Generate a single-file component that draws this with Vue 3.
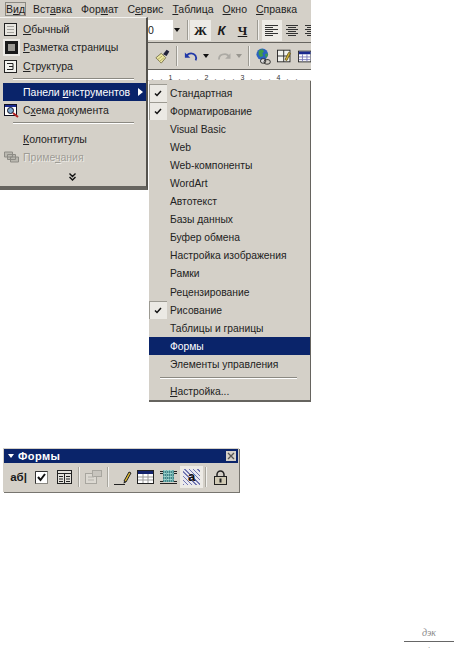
<script setup>
const menuBar = [
  { label: "Вид", u: 1, active: true },
  { label: "Вставка", u: 3 },
  { label: "Формат", u: 3 },
  { label: "Сервис", u: 1 },
  { label: "Таблица", u: 0 },
  { label: "Окно", u: 0 },
  { label: "Справка", u: 0 },
];

const toolbarItems = [
  "Стандартная",
  "Форматирование",
  "Visual Basic",
  "Web",
  "Web-компоненты",
  "WordArt",
  "Автотекст",
  "Базы данных",
  "Буфер обмена",
  "Настройка изображения",
  "Рамки",
  "Рецензирование",
  "Рисование",
  "Таблицы и границы",
  "Формы",
  "Элементы управления",
];
const checked = ["Стандартная", "Форматирование", "Рисование"];

const rulerTicks = [".", ".", ".", "1", ".", ".", ".", "2", ".", ".", ".", "3", ".", ".", ".", "4", ".", "."];
</script>

<template>
  <div class="page">
    <div class="word">
      <div class="menubar">
        <span v-for="m in menuBar" :key="m.label" class="top" :class="{ active: m.active }">{{ m.label.slice(0, m.u) }}<u>{{ m.label[m.u] }}</u>{{ m.label.slice(m.u + 1) }}</span>
      </div>
      <div class="bar bar1">
        <div class="combo">0</div>
        <div class="drop"><i class="arrow"></i></div>
        <div class="sep"></div>
        <span class="fmt on">Ж</span>
        <span class="fmt it">К</span>
        <span class="fmt un">Ч</span>
        <div class="sep gap"></div>
        <span class="align on"><svg width="14" height="12" viewBox="0 0 14 12"><path d="M0 1.500h13M0 3.500h8M0 5.500h13M0 7.500h8M0 9.500h13M0 11.500h8" stroke="#333" /></svg></span>
        <span class="align"><svg width="14" height="12" viewBox="0 0 14 12"><path d="M1 1.500h12M3 3.500h8M1 5.500h12M3 7.500h8M1 9.500h12M3 11.500h8" stroke="#333" /></svg></span>
        <span class="align end"><svg width="8" height="12" viewBox="0 0 8 12"><path d="M2 1.500h6M4 3.500h4M2 5.500h6M4 7.500h4M2 9.500h6M4 11.500h4" stroke="#333" /></svg></span>
      </div>
      <div class="bar bar2">
        <svg class="brush" width="17" height="18" viewBox="0 0 17 18"><path d="M1 11l6-5 5 5-5 6z" fill="#ece6a0" stroke="#77724a" /><path d="M3 13l5-4M5 15l5-4" stroke="#b0a860" /><path d="M9 7l4-5 3 2-3 5z" fill="#22243a" /></svg>
        <div class="sep s2"></div>
        <svg class="undo" width="15" height="14" viewBox="0 0 15 14"><path d="M13 12c2-4-1-8-5-8-2 0-4 1-5 3" fill="none" stroke="#2038a8" stroke-width="2" /><path d="M1 3v6h6z" fill="#2038a8" /></svg>
        <i class="arrow a1"></i>
        <svg class="redo" width="15" height="14" viewBox="0 0 15 14"><path d="M1 11c0-4 3-6 7-6 2 0 3 1 4 2" fill="none" stroke="#acaaa4" stroke-width="2" /><path d="M14 4v6H8z" fill="#acaaa4" /></svg>
        <i class="arrow a2 dim"></i>
        <div class="sep s3"></div>
        <svg class="globe" width="17" height="19" viewBox="0 0 17 19"><circle cx="7" cy="7" r="6.500" fill="#2a62c0" /><path d="M3 3l4-2 2 3-2 2 1 3-3 1-2-3zM10 7l3-1 0 3-2 2z" fill="#3f9c48" /><rect x="5" y="12" width="6" height="5" rx="2.500" fill="#ddd" stroke="#222" /><rect x="9" y="13" width="7" height="5" rx="2.500" fill="none" stroke="#222" /></svg>
        <svg class="gridp" width="16" height="16" viewBox="0 0 16 16"><rect x="0.500" y="1.500" width="14" height="13" fill="#f2f2ee" stroke="#222" /><path d="M7.500 1.500v13M0.500 8h14" stroke="#222" /><path d="M9 12l4-8 2 1-4 8z" fill="#d8b838" stroke="#6a5a18" /></svg>
        <svg class="tbl" width="15" height="15" viewBox="0 0 15 15"><rect x="0.500" y="1.500" width="14" height="12" fill="#fff" stroke="#222" /><rect x="1" y="2" width="13" height="3" fill="#1a2a90" /><path d="M1 8h13M1 11h13M5 5v8M10 5v8" stroke="#7878b8" /></svg>
      </div>
      <div class="ruler">
        <span v-for="(t, i) in rulerTicks" :key="i" class="tick">{{ t }}</span>
      </div>

      <div class="menu">
        <div class="mi"><svg class="mic" width="13" height="13" viewBox="0 0 13 13"><rect x="0.500" y="0.500" width="12" height="12" fill="#e8e6e0" stroke="#222" /><path d="M3 3.500h7M3 6.500h7M3 9.500h7" stroke="#a4a29c" /></svg><span><u>О</u>бычный</span></div>
        <div class="mi"><span class="pressed"><svg width="13" height="13" viewBox="0 0 13 13"><rect width="13" height="13" fill="#1a1a1a" /><rect x="3" y="3" width="7" height="7" fill="#9c9a94" /></svg></span><span><u>Р</u>азметка страницы</span></div>
        <div class="mi"><svg class="mic" width="13" height="13" viewBox="0 0 13 13"><rect x="0.500" y="0.500" width="12" height="12" fill="#f2f2ee" stroke="#222" /><path d="M3 3.500h6v6H3M5 6.500h4" fill="none" stroke="#222" /></svg><span><u>С</u>труктура</span></div>
        <hr class="rule" />
        <div class="mi sel"><span>Панели <u>и</u>нструментов</span><i class="sub"></i></div>
        <div class="mi"><svg class="mic" width="15" height="14" viewBox="0 0 15 14"><rect x="0.500" y="0.500" width="12" height="11" fill="#fff" stroke="#112" /><rect x="1" y="1" width="11" height="2" fill="#1a2a90" /><circle cx="6.500" cy="6.500" r="3" fill="#7fa8d0" stroke="#112" /><path d="M9 9l5 4" stroke="#b02020" stroke-width="2" /></svg><span>С<u>х</u>ема документа</span></div>
        <hr class="rule last" />
        <div class="mi"><span><u>К</u>олонтитулы</span></div>
        <div class="mi off"><svg class="mic" width="15" height="12" viewBox="0 0 15 12"><path d="M0.500 1h8v5h-8zM3.500 3.500h8v5h-8zM6.500 6h8v5h-8z" fill="#bab8b0" stroke="#8e8c86" /></svg><span>Приме<u>ч</u>ания</span></div>
        <div class="more"><svg width="7" height="8" viewBox="0 0 7 8"><path d="M0.500 0.500l3 3 3-3M0.500 4l3 3 3-3" fill="none" stroke="#111" stroke-width="1.400" /></svg></div>
      </div>

      <div class="submenu">
        <div v-for="item in toolbarItems" :key="item" class="si" :class="{ sel: item === 'Формы' }">
          <span class="chk" :class="{ on: checked.includes(item) }">
            <svg v-if="checked.includes(item)" width="8" height="7" viewBox="0 0 8 7"><path d="M1 3.500l2 2L7 1" fill="none" stroke="#111" stroke-width="1.500" /></svg>
          </span>
          <span>{{ item }}</span>
        </div>
        <hr class="rule r2" />
        <div class="si"><span class="chk"></span><span><u>Н</u>астройка...</span></div>
      </div>
    </div>

    <div class="forms">
      <div class="ftitle">
        <span class="tri"></span>
        <span class="fname">Формы</span>
        <svg class="close" width="10" height="10" viewBox="0 0 10 10"><rect width="10" height="10" fill="#d4d0c8" /><path d="M2 2l6 6M8 2l-6 6" stroke="#555" stroke-width="1.300" /></svg>
      </div>
      <div class="ftools">
        <span class="tb ab">аб|</span>
        <span class="tb"><svg width="13" height="13" viewBox="0 0 13 13"><rect x="0.500" y="0.500" width="12" height="12" fill="#fff" stroke="#8a8882" /><path d="M0.500 12.500v-12h12" fill="none" stroke="#333" /><path d="M3 6l2.500 3L10 3" fill="none" stroke="#111" stroke-width="2" /></svg></span>
        <span class="tb"><svg width="15" height="14" viewBox="0 0 15 14"><rect x="0.500" y="0.500" width="14" height="13" fill="#e4e2dc" stroke="#222" /><path d="M0.500 3.500h14M7.500 3.500v10M2 6.500h4M2 9h4M2 11.500h4M9 6.500h4M9 9h4M9 11.500h4" stroke="#222" /></svg></span>
        <span class="fsep"></span>
        <span class="tb"><svg width="17" height="14" viewBox="0 0 17 14"><rect x="0.500" y="3.500" width="11" height="10" fill="#dcd9d2" stroke="#a8a69f" /><rect x="7.500" y="0.500" width="9" height="6" fill="#c8c5be" stroke="#a8a69f" /><path d="M3 7h6M3 10h6" stroke="#b4b2ab" /></svg></span>
        <span class="fsep"></span>
        <span class="tb"><svg width="18" height="15" viewBox="0 0 18 15"><path d="M0 14.500h11" stroke="#222" /><path d="M10 11l5-9 2 1-5 9z" fill="#dcb830" stroke="#222" /><path d="M10 11l-0.500 2.500 2.500-1z" fill="#222" /></svg></span>
        <span class="tb"><svg width="17" height="14" viewBox="0 0 17 14"><rect x="0.500" y="0.500" width="16" height="13" fill="#fff" stroke="#222" /><rect x="1" y="1" width="15" height="3" fill="#14246e" /><path d="M1 7h15M1 10h15M6 4v9M11 4v9" stroke="#999" /></svg></span>
        <span class="tb"><svg width="17" height="15" viewBox="0 0 17 15"><path d="M0 1.500h17M0 3.500h17M0 11.500h17M0 13.500h17" stroke="#222" /><rect x="3" y="0" width="11" height="12" fill="#6fb4b0" /><path d="M3 2h11M3 5h11M3 8h11M3 11h11" stroke="#1d5060" stroke-dasharray="1 1" /><path d="M5 0v12M8 0v12M11 0v12" stroke="#d4efe8" stroke-dasharray="1 2" /></svg></span>
        <span class="tb pushed"><span class="shade">a</span></span>
        <span class="fsep"></span>
        <span class="tb"><svg width="15" height="15" viewBox="0 0 15 15"><path d="M4 7V4.500a3.500 3.500 0 0 1 7 0V7" fill="none" stroke="#222" stroke-width="1.500" /><rect x="1.500" y="6.500" width="12" height="8" fill="#cfc9b4" stroke="#222" /><rect x="6.500" y="8.500" width="2" height="4" fill="#222" /></svg></span>
      </div>
    </div>

    <div class="foot">
      <span class="sig">дэк</span>
      <div class="line"></div>
      <span class="dot">.</span>
    </div>
  </div>
</template>

<style>
html, body {
  background: #fff;
}
</style>

<style scoped>
.page {
  width: 455px;
  height: 650px;
  overflow: hidden;
  display: flex;
  flex-direction: column;
  font-family: "Liberation Sans", Arial, sans-serif;
  font-size: 10.500px;
  color: #222;
  background: #fff;
}
.word {
  position: relative;
  width: 311px;
  height: 81px;
  flex: none;
  background: #d4d0c8;
}
.menubar {
  height: 18px;
  display: flex;
  align-items: center;
  padding-left: 6px;
  gap: 9px;
}
.top {
  white-space: nowrap;
}
.top.active {
  outline: 1px solid #8b8982;
  outline-offset: 0;
  box-shadow: 1px 1px 0 #fff;
  margin-right: -1px;
}
.bar {
  display: flex;
  align-items: center;
  padding-left: 148px;
}
.bar1 {
  height: 24px;
  border-bottom: 1px solid #66645f;
}
.bar2 {
  height: 26px;
  padding-left: 155px;
  border-bottom: 1px solid #66645f;
}
.combo {
  width: 25px;
  height: 20px;
  line-height: 20px;
  background: #fff;
  color: #222;
  box-sizing: border-box;
  margin-top: -1px;
}
.drop {
  width: 14px;
  display: flex;
  justify-content: center;
  padding-right: 6px;
  box-sizing: border-box;
}
.arrow {
  width: 0;
  height: 0;
  flex: none;
  border: 3px solid transparent;
  border-top: 4px solid #111;
  border-bottom: 0;
}
.arrow.dim {
  border-top-color: #98968f;
}
.a1 {
  margin: 0 9px 0 5px;
}
.a2 {
  margin: 0 3px 0 5px;
}
.sep {
  width: 2px;
  height: 20px;
  flex: none;
  margin-right: 1px;
  background: #9c9a92;
  border-right: 1px solid #f2f1ee;
  box-sizing: border-box;
}
.sep.gap {
  margin: 0 3px 0 4px;
}
.s2 {
  margin: 0 6px;
}
.s3 {
  margin: 0 6px 0 3px;
}
.gridp {
  margin: 0 6px 0 6px;
}
.fmt {
  width: 21px;
  height: 21px;
  line-height: 21px;
  text-align: center;
  font: bold 13px/21px "Liberation Serif", serif;
  color: #1a1a1a;
}
.on {
  background: #edebe6;
}
.fmt.it {
  font-style: italic;
  font-family: "Liberation Sans", sans-serif;
}
.fmt.un {
  text-decoration: underline;
}
.align {
  width: 20px;
  height: 21px;
  display: flex;
  align-items: center;
  justify-content: center;
  flex: none;
}
.align.end {
  width: 8px;
  margin-left: 1px;
}
.ruler {
  height: 10px;
  background: #fff;
  display: flex;
  align-items: flex-end;
  padding-left: 139px;
  overflow: hidden;
}
.tick {
  width: 9px;
  flex: none;
  text-align: center;
  font-size: 7px;
  line-height: 5px;
  color: #333;
}
.menu {
  position: absolute;
  left: 0;
  top: 17px;
  width: 148px;
  height: 173px;
  padding-top: 2px;
  box-sizing: border-box;
  background: #d4d0c8;
  border-top: 1px solid #f4f3f0;
  border-right: 2px solid #55534e;
  border-bottom: 4px solid #66645f;
}
.mi {
  height: 18.300px;
  display: flex;
  align-items: center;
  position: relative;
  padding-left: 23px;
  white-space: nowrap;
}
.mic {
  position: absolute;
  left: 4px;
  top: 3px;
}
.pressed {
  position: absolute;
  left: 3px;
  top: 1px;
  width: 17px;
  height: 17px;
  display: flex;
  align-items: center;
  justify-content: center;
  background: #edebe6;
}
.sel {
  background: #0a246a;
  color: #fff;
}
.menu .sel {
  margin-left: 3px;
  padding-left: 20px;
}
.off {
  color: #9e9c95;
}
.off span {
  text-shadow: 1px 1px 0 #eceae6;
}
.sub {
  position: absolute;
  right: 3px;
  top: 5px;
  border: 4px solid transparent;
  border-left: 5px solid #fff;
  border-right: 0;
}
.rule {
  margin: 3px 12px 3px 13px;
  border: 0;
  border-top: 1px solid #8b8982;
  border-bottom: 1px solid #fff;
}
.rule.last {
  margin-bottom: 5.500px;
}
.more {
  height: 20px;
  display: flex;
  align-items: center;
  justify-content: center;
  padding-right: 2px;
}
.submenu {
  position: absolute;
  left: 149px;
  top: 81px;
  width: 162px;
  height: 321px;
  padding-top: 3px;
  box-sizing: border-box;
  background: #d4d0c8;
  border-right: 1px solid #66645f;
  border-bottom: 2px solid #66645f;
}
.si {
  height: 18.100px;
  display: flex;
  align-items: center;
  gap: 3px;
  font-size: 10.300px;
  white-space: nowrap;
}
.si.sel {
  background: #0a246a;
  color: #fff;
}
.chk {
  width: 18px;
  height: 18px;
  flex: none;
  display: flex;
  align-items: center;
  justify-content: center;
}
.chk.on {
  background: #ebe9e4;
  box-shadow: inset 1px 1px 0 #9c9a92;
}
.r2 {
  margin: 3px 13px 4px 11px;
}
.forms {
  width: 236px;
  height: 44px;
  margin: 367px 0 0 3px;
  flex: none;
  padding: 1px 1px 0;
  box-sizing: border-box;
  background: #d4d0c8;
  box-shadow: 1px 1px 0 #77756f;
}
.ftitle {
  height: 14px;
  display: flex;
  align-items: center;
  background: #0a246a;
  color: #fff;
  padding: 0 2px 0 4px;
  gap: 4px;
}
.tri {
  border: 3px solid transparent;
  border-top: 4px solid #fff;
  border-bottom: 0;
}
.fname {
  font-weight: bold;
  font-size: 11px;
  letter-spacing: 0.400px;
  flex: 1;
}
.ftools {
  height: 28px;
  display: flex;
  align-items: center;
  padding-left: 3px;
}
.tb {
  width: 23px;
  height: 22px;
  flex: none;
  display: flex;
  align-items: center;
  justify-content: center;
}
.ab {
  font-weight: bold;
  font-size: 11.500px;
  color: #1a1a1a;
}
.fsep {
  width: 2px;
  height: 20px;
  flex: none;
  margin: 0 2px;
  background: #a8a69e;
  border-right: 1px solid #f2f1ee;
  box-sizing: border-box;
}
.pushed {
  background: #edebe6;
}
.shade {
  width: 17px;
  height: 16px;
  line-height: 16px;
  text-align: center;
  font-weight: bold;
  font-size: 13px;
  color: #111;
  background: repeating-linear-gradient(45deg, #7478b0 0 1px, #e8e8f0 1px 3px);
}
.foot {
  margin: 135px 0 0 404px;
  width: 50px;
  flex: none;
  text-align: center;
  color: #888;
}
.sig {
  font: italic 10px/12px "Liberation Serif", serif;
  display: block;
}
.line {
  border-top: 1px solid #666;
  margin-top: 2px;
}
.dot {
  display: block;
  font-size: 8px;
  line-height: 8px;
}
</style>
